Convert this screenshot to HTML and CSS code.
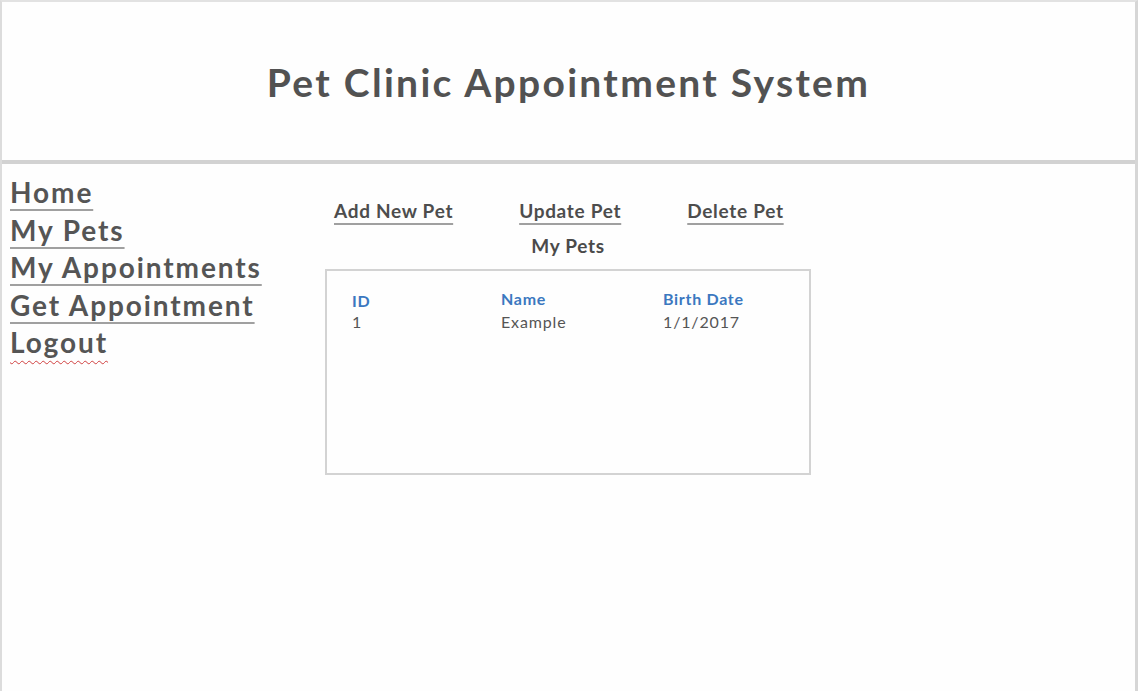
FILE: index.html
```html
<!DOCTYPE html>
<html>
<head>
<meta charset="utf-8">
<link rel="stylesheet" href="styles.css">
</head>
<body>
<div class="frame">
  <header class="top">
    <h1 class="title">Pet Clinic Appointment System</h1>
  </header>
  <div class="main">
    <nav class="side">
      <a class="nav-link" href="#">Home</a>
      <a class="nav-link" href="#">My Pets</a>
      <a class="nav-link" href="#">My Appointments</a>
      <a class="nav-link" href="#">Get Appointment</a>
      <a class="nav-link logout" href="#">Logout</a>
    </nav>
    <section class="content">
      <div class="actions">
        <a class="action" href="#">Add New Pet</a>
        <a class="action" href="#">Update Pet</a>
        <a class="action" href="#">Delete Pet</a>
      </div>
      <div class="caption">My Pets</div>
      <div class="box">
        <table class="pets">
          <thead>
            <tr><th class="c-id id-h">ID</th><th class="c-name">Name</th><th class="c-date">Birth Date</th></tr>
          </thead>
          <tbody>
            <tr><td class="c-id">1</td><td class="c-name">Example</td><td class="c-date">1/1/2017</td></tr>
          </tbody>
        </table>
      </div>
    </section>
  </div>
</div>
</body>
</html>
```
FILE: styles.css
```css
html, body {
  margin: 0;
  padding: 0;
  background: #fff;
}
body {
  font-family: Lato, "Open Sans", sans-serif;
  color: #4d4d4d;
}
.frame {
  box-sizing: border-box;
  width: 1138px;
  height: 691px;
  border-top: 2px solid #e2e2e2;
  border-left: 2px solid #dcdcdc;
  border-right: 3px solid #d6d6d6;
  background: #fefefe;
}
.top {
  box-sizing: border-box;
  height: 162px;
  display: flex;
  align-items: center;
  justify-content: center;
  border-bottom: 4px solid #d2d2d2;
  padding-top: 2px;
}
.title {
  margin: 0;
  font-size: 39px;
  font-weight: 700;
  color: #525252;
  letter-spacing: 2.3px;
}
.main {
  display: flex;
}
.side {
  width: 323px;
  display: flex;
  flex-direction: column;
  align-items: flex-start;
  padding: 10px 0 0 8px;
  box-sizing: border-box;
}
.nav-link {
  font-size: 28px;
  font-weight: 700;
  line-height: 37.5px;
  letter-spacing: 1.9px;
  color: #555;
  text-decoration: underline;
  text-decoration-color: #a0a0a0;
  text-decoration-thickness: 2px;
  text-underline-offset: 6px;
}
.nav-link.logout {
  text-decoration: underline wavy #d04040;
  text-decoration-thickness: 1px;
  text-underline-offset: 7px;
}
.content {
  width: 486px;
  padding-top: 35px;
  display: flex;
  flex-direction: column;
  align-items: stretch;
}
.actions {
  display: flex;
  justify-content: flex-start;
  gap: 66px;
  padding-left: 9px;
}
.action {
  font-size: 19px;
  font-weight: 700;
  line-height: 23px;
  letter-spacing: 0.7px;
  color: #4d4d4d;
  text-decoration: underline;
  text-decoration-color: #a0a0a0;
  text-decoration-thickness: 2px;
  text-underline-offset: 5px;
}
.caption {
  text-align: center;
  font-size: 19px;
  font-weight: 700;
  line-height: 23px;
  letter-spacing: 0.7px;
  margin-top: 12px;
  color: #4a4a4a;
}
.box {
  box-sizing: border-box;
  height: 206px;
  margin-top: 12px;
  border: 2px solid #d3d3d3;
  padding: 17px 0 0 25px;
}
.pets {
  border-collapse: collapse;
  font-size: 16px;
}
.pets th {
  text-align: left;
  color: #3b78c0;
  font-weight: 700;
  padding: 0;
  line-height: 21px;
  letter-spacing: 0.7px;
  vertical-align: top;
}
.pets th.id-h {
  padding-top: 2px;
}
.pets td {
  padding: 0;
  line-height: 21px;
  letter-spacing: 0.85px;
  color: #555;
  vertical-align: top;
}
.c-id { width: 149px; }
.c-name { width: 162px; }
.c-date { width: 120px; }
```
